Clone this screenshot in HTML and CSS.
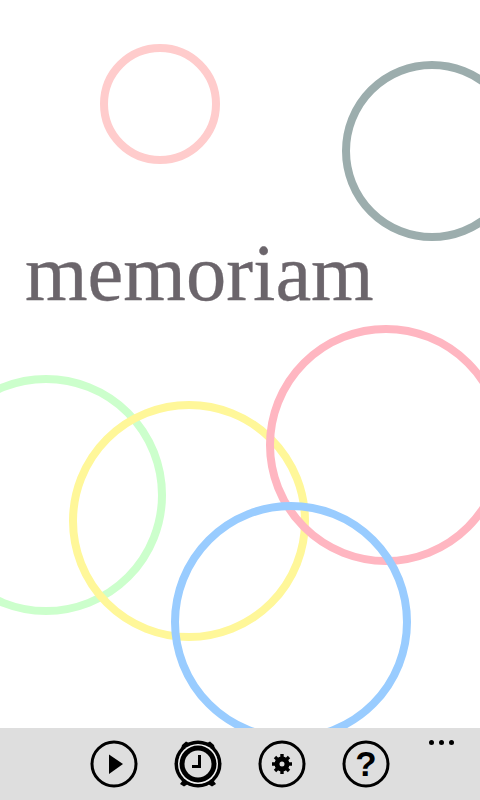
FILE: index.html
```html
<!DOCTYPE html>
<html lang="en">
<head>
    <meta charset="UTF-8">
    <meta name="viewport" content="width=device-width, initial-scale=1.0">
    <title>memoriam</title>
    <link rel="stylesheet" href="styles.css">
</head>
<body>
    <div class="page">
        <main class="canvas">
            <div class="ring ring-rose"></div>
            <div class="ring ring-slate"></div>
            <div class="ring ring-green"></div>
            <div class="ring ring-yellow"></div>
            <div class="ring ring-pink"></div>
            <div class="ring ring-blue"></div>
            <h1 class="title">memoriam</h1>
        </main>

        <nav class="app-bar">
            <div class="bar-buttons">
                <svg class="bar-icon" viewBox="0 0 48 48">
                    <circle class="outline" cx="24" cy="24" r="22"/>
                    <path class="solid" d="M19 14.5 L33 24 L19 34 Z"/>
                </svg>
                <svg class="bar-icon" viewBox="0 0 48 48">
                    <path class="solid" d="M8 5 L12 1.5 L15 3 L33 3 L36 1.5 L40 5 L41 9 L39 40 L42 44 L38 46.5 L34 44 L14 44 L10 46.5 L6 44 L9 40 L7 9 Z"/>
                    <circle class="solid" cx="24" cy="24" r="23.5"/>
                    <circle class="ring-gap" cx="24" cy="24" r="20"/>
                    <circle class="solid" cx="24" cy="24" r="18.5"/>
                    <circle class="bg-fill" cx="24" cy="24" r="13.5"/>
                    <path class="hand" d="M25.5 15 V26.5 H18"/>
                </svg>
                <svg class="bar-icon" viewBox="0 0 48 48">
                    <circle class="outline" cx="24" cy="24" r="22"/>
                    <circle class="gear-ring" cx="24" cy="24" r="5"/>
                    <path class="gear-teeth" d="M24 14 V34 M14 24 H34 M17 17 L31 31 M31 17 L17 31"/>
                </svg>
                <svg class="bar-icon" viewBox="0 0 48 48">
                    <circle class="outline" cx="24" cy="24" r="22"/>
                    <text class="help-mark" x="24" y="36">?</text>
                </svg>
            </div>
            <div class="more">
                <span class="dot"></span>
                <span class="dot"></span>
                <span class="dot"></span>
            </div>
        </nav>
    </div>
</body>
</html>
```

FILE: styles.css
```css
body {
    margin: 0;
    background-color: #fff;
}

.page {
    width: 480px;
    height: 800px;
    display: flex;
    flex-direction: column;
    overflow: hidden;
}

.canvas {
    position: relative;
    flex: 1;
    overflow: hidden;
    background-color: #fff;
}

.title {
    position: relative;
    margin: 0;
    padding: 227px 0 0 25px;
    font-family: "Liberation Serif", serif;
    font-size: 80.5px;
    font-weight: normal;
    line-height: 92px;
    color: #6b656b;
    -webkit-text-stroke: 0.3px #6b656b;
}

.ring {
    position: absolute;
    box-sizing: border-box;
    border-radius: 50%;
    width: 240px;
    height: 240px;
    border: 8px solid;
}

.ring-rose {
    left: 100px;
    top: 44px;
    width: 120px;
    height: 120px;
    border-color: #ffcccc;
}

.ring-slate {
    left: 342px;
    top: 61px;
    width: 180px;
    height: 180px;
    border-color: #9cadad;
}

.ring-green {
    left: -74px;
    top: 375px;
    border-color: #ccffcc;
}

.ring-yellow {
    left: 69px;
    top: 401px;
    border-color: #fff799;
}

.ring-pink {
    left: 266px;
    top: 325px;
    border-color: #ffb6c1;
}

.ring-blue {
    left: 171px;
    top: 502px;
    border-color: #99ccff;
}

.app-bar {
    position: relative;
    height: 72px;
    display: flex;
    background-color: #dedede;
}

.bar-buttons {
    flex: 1;
    display: flex;
    justify-content: center;
    align-items: flex-start;
    gap: 36px;
    padding-top: 12px;
}

.bar-icon {
    display: block;
    width: 48px;
    height: 48px;
}

.outline {
    fill: none;
    stroke: #000;
    stroke-width: 3;
}

.solid {
    fill: #000;
}

.bg-fill {
    fill: #dedede;
}

.ring-gap {
    fill: #f2f2f2;
}

.hand {
    fill: none;
    stroke: #000;
    stroke-width: 3;
}

.gear-ring {
    fill: none;
    stroke: #000;
    stroke-width: 5;
}

.gear-teeth {
    stroke: #000;
    stroke-width: 3.4;
    stroke-dasharray: 4 12;
}

.help-mark {
    font-family: "Liberation Sans", sans-serif;
    font-size: 35px;
    font-weight: bold;
    text-anchor: middle;
    fill: #000;
}

.more {
    position: absolute;
    right: 26px;
    top: 12px;
    display: flex;
    gap: 5px;
}

.dot {
    width: 5px;
    height: 5px;
    border-radius: 50%;
    background-color: #000;
}
```
